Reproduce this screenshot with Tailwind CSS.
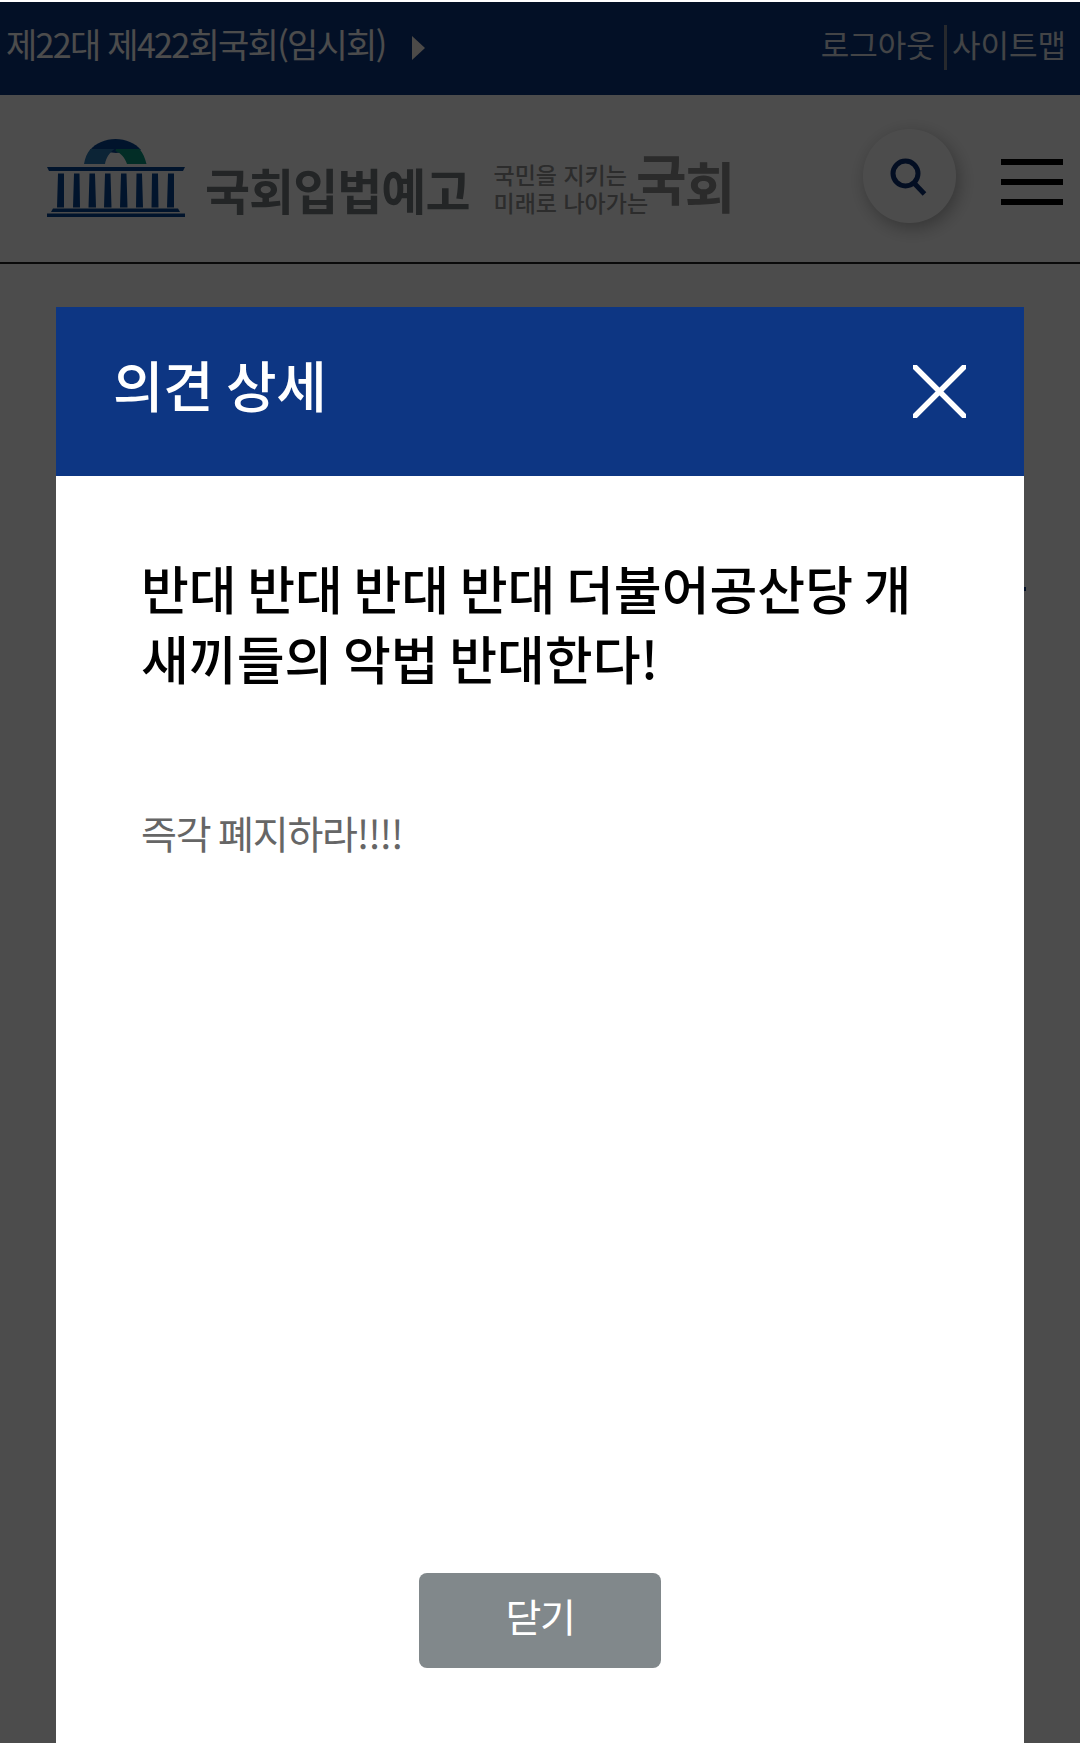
<!DOCTYPE html>
<html lang="ko">
<head>
    <meta charset="UTF-8">
    <meta name="viewport" content="width=device-width, initial-scale=1.0">
    <title>국회입법예고</title>
    <script src="https://cdn.jsdelivr.net/npm/@tailwindcss/browser@4"></script>
</head>
<body class="bg-white h-[1743px] overflow-hidden pt-0.5 font-['Noto_Sans_CJK_KR','Noto_Sans',sans-serif]">
    <!-- Top bar -->
    <div class="bg-[#0d3680] h-[93px] pl-1.5 pr-3.5 flex items-start justify-between text-white whitespace-nowrap">
        <div class="flex items-center pt-[18px]">
            <span class="text-[34px] leading-[48px] tracking-[-1.7px]">제22대 제422회국회(임시회)</span>
            <svg class="ml-[27px] mt-2 w-[13px] h-6" viewBox="0 0 13 24" fill="#fff8f0"><path d="M0 0L13 12L0 24Z"></path></svg>
        </div>
        <div class="flex pt-5 text-[31px] leading-[44px] text-[#dfe4ec]">
            <a href="#">로그아웃</a>
            <span class="w-[3px] h-[45px] mt-[3px] ml-[9px] mr-[5px] bg-[#848a96]"></span>
            <a href="#">사이트맵</a>
        </div>
    </div>

    <!-- Header -->
    <header class="h-[169px] border-b-2 border-[#222] flex items-start pl-[47px] pr-[17px] whitespace-nowrap">
        <svg class="w-[138px] h-[80px] mt-[43px] shrink-0" viewBox="0 0 138 80">
            <path d="M43 12C49 5 58 1 68.500 1S88 5 94 12L69 15Z" fill="#054593"></path>
            <path d="M37 26C38 20 40 15 43.500 11H67.500C62 15 59 20 58 26Z" fill="#2a78b4"></path>
            <path d="M99.500 26C98 20 96 15 92.500 11H69L68.500 13C74 15 78 20 80 26Z" fill="#08977f"></path>
            <g fill="#054593">
                <path d="M0 29H138L136 33H2Z"></path>
                <path d="M11 35.500h6v34h-7zM27 35.500h5.500l.5 34h-7zM42.500 35.500h5.500l1 34h-7.500zM58 35.500h5.500l1 34h-7.500zM74 35.500h5.500l1 34h-7.500zM89.500 35.500h5.500l1 34h-7zM105 35.500h6l.5 34h-7zM121 35.500h6v34h-7z"></path>
                <path d="M6 70.500H131L133 74H4Z"></path>
                <path d="M0 75.500H138V79H0Z"></path>
            </g>
        </svg>
        <div class="ml-5 mt-[59px] text-[49px] leading-[70px] font-bold tracking-[-1px] text-[#777c80]">국회입법예고</div>
        <div class="ml-6 mt-[65px] text-[23px] leading-[28px] font-medium text-[#939393]">
            <div>국민을 지키는</div>
            <div>미래로 나아가는</div>
        </div>
        <div class="-ml-3 mt-[44px] flex text-[55px] leading-[74px] font-bold tracking-[-2px] text-[#8f8f8f]">
            <span>국</span><span class="mt-2">회</span>
        </div>
        <button class="ml-auto mt-[34px] w-[93px] h-[94px] rounded-full bg-white shadow-[3px_5px_18px_rgba(0,0,0,0.3)] flex items-center justify-center shrink-0">
            <svg class="w-[38px] h-[38px] -ml-0.5 mt-px" viewBox="0 0 38 38" fill="none" stroke="#0d2f73" stroke-width="5">
                <circle cx="15.500" cy="15.500" r="12.500"></circle>
                <path d="M24 25L34.500 36"></path>
            </svg>
        </button>
        <button class="ml-[45px] mt-16 w-[62px] flex flex-col gap-3.5 shrink-0">
            <span class="w-full h-1.5 bg-black"></span>
            <span class="w-full h-1.5 bg-black"></span>
            <span class="w-full h-1.5 bg-black"></span>
        </button>
    </header>

    <main class="flex justify-end pt-[323px] pr-[54px]">
        <span class="w-1 h-1 bg-[#0d3680]"></span>
    </main>

    <!-- Opinion modal -->
    <div id="opinionModal" class="fixed inset-x-0 top-0.5 bottom-0 bg-black/70 px-14 pt-[305px] flex flex-col">
        <div class="h-[169px] shrink-0 bg-[#0d3683] pl-[57px] pr-[58px] flex items-start justify-between text-white">
            <h2 class="mt-9 text-[55px] leading-[80px] font-medium tracking-[-0.5px] [word-spacing:-2px]">의견 상세</h2>
            <button id="closeIcon" class="mt-[58px]">
                <svg class="w-[53px] h-[53px]" viewBox="0 0 53 53" stroke="#fff" stroke-width="5.500"><path d="M0 0L53 53M53 0L0 53"></path></svg>
            </button>
        </div>
        <div class="grow bg-white flex flex-col items-center pb-[75px]">
            <div class="w-full px-[85px] pt-[77px] grow">
                <h3 class="text-[52px] leading-[70px] font-medium text-black whitespace-nowrap [word-spacing:-4px]">반대 반대 반대 반대 더불어공산당 개<br>새끼들의 악법 반대한다!</h3>
                <p class="mt-[111px] text-[39px] leading-[56px] tracking-[-1.2px] [word-spacing:-2px] text-[#666]">즉각 폐지하라!!!!</p>
            </div>
            <button id="closeButton" class="w-[242px] h-[95px] pb-3 rounded-lg bg-[#81888b] text-white text-[39px] leading-[56px] tracking-[-1.3px]">닫기</button>
        </div>
    </div>

    <script>
        // Both close controls hide the modal
        const modal = document.getElementById('opinionModal');

        function closeModal() {
            modal.classList.add('hidden');
        }

        document.getElementById('closeIcon').addEventListener('click', closeModal);
        document.getElementById('closeButton').addEventListener('click', closeModal);
    </script>
</body>
</html>
